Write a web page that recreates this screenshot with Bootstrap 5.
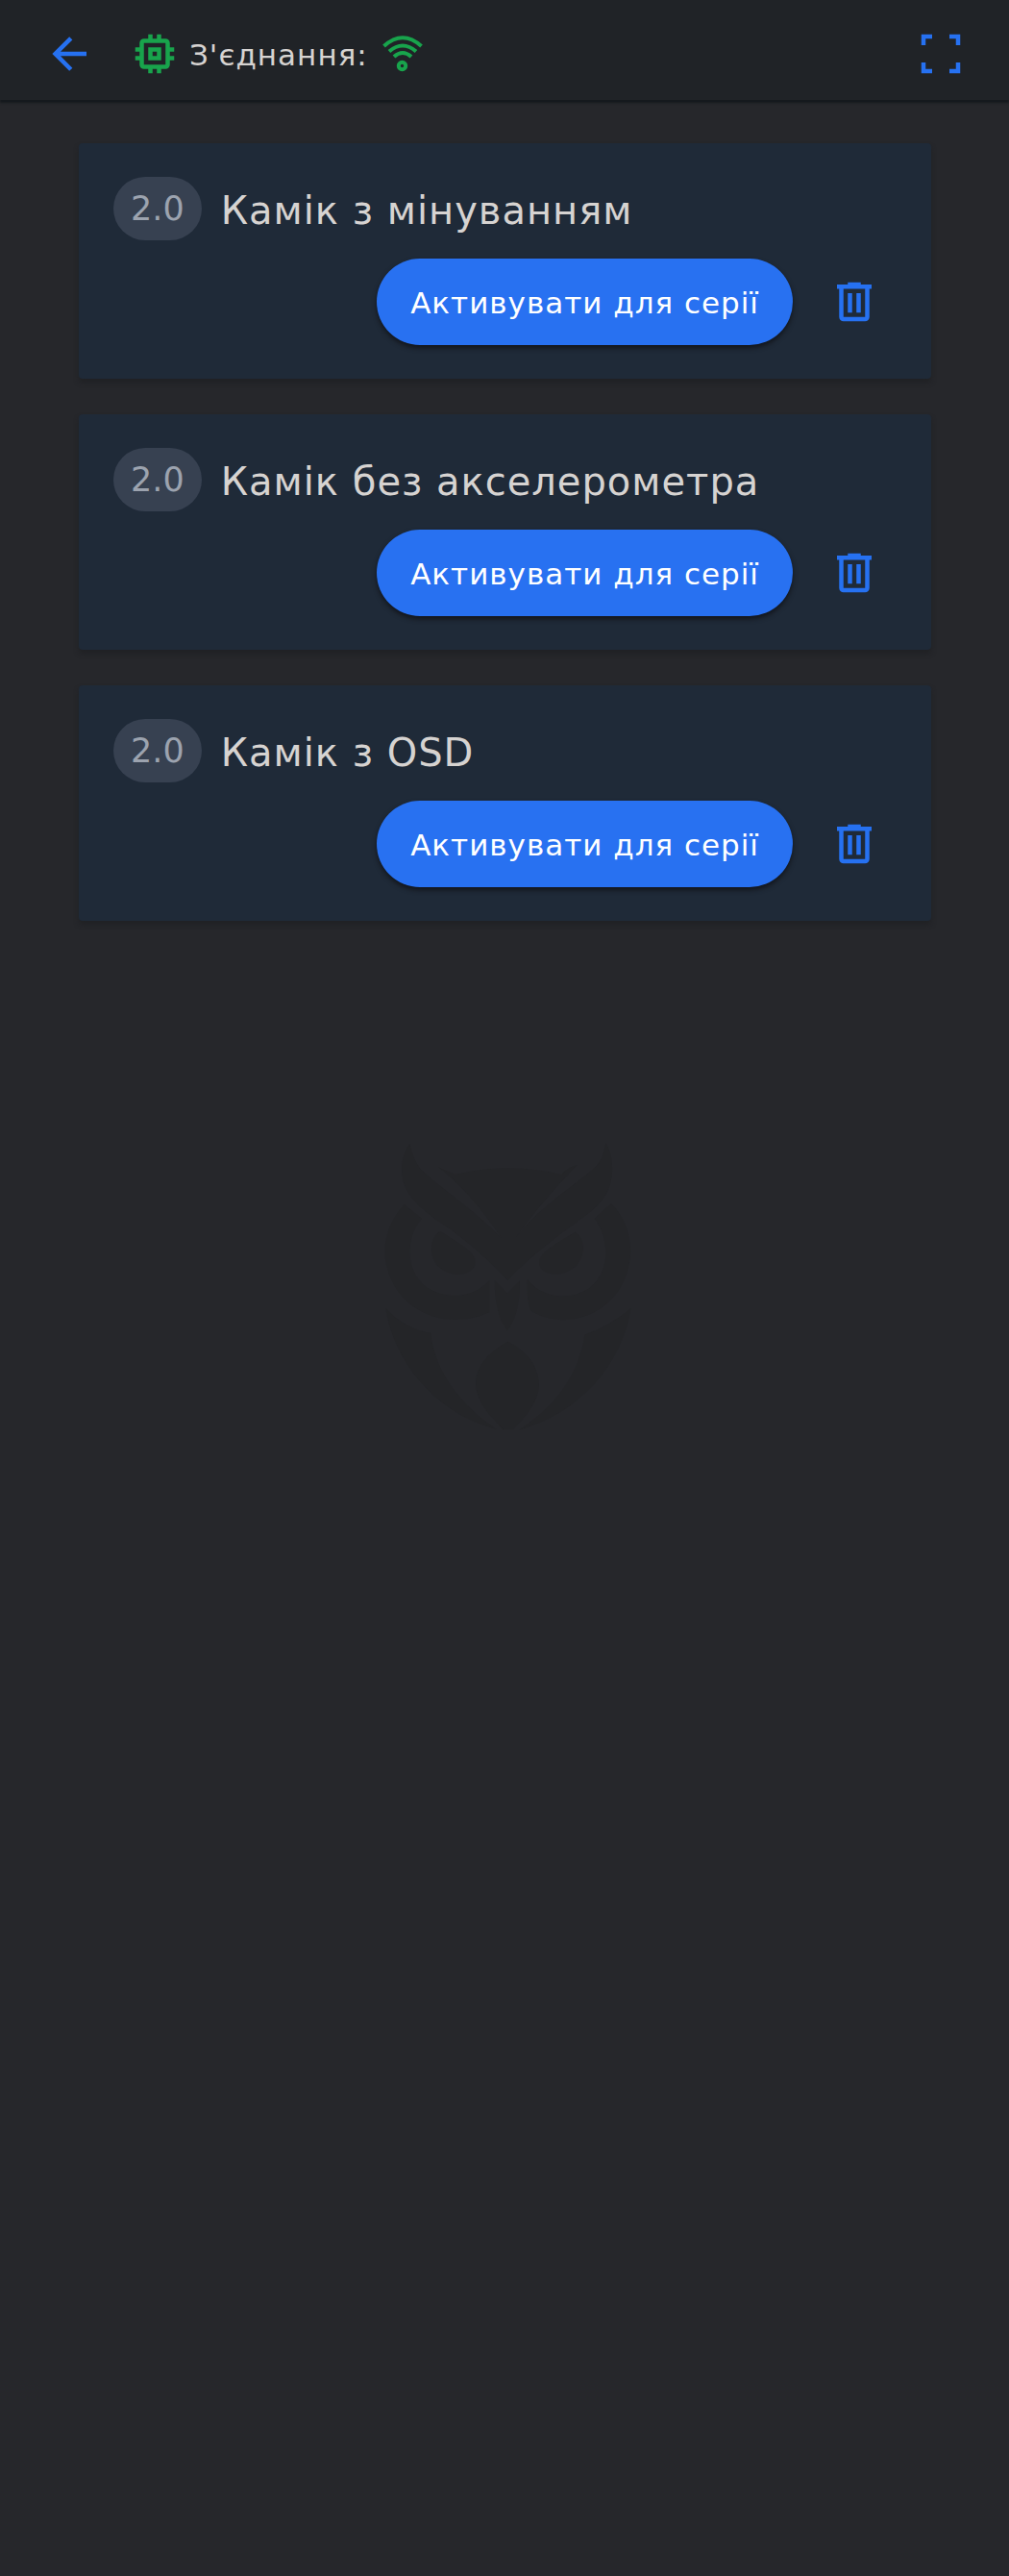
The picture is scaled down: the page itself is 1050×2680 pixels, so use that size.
<!DOCTYPE html>
<html lang="uk">
<head>
<meta charset="utf-8">
<meta name="viewport" content="width=device-width, initial-scale=1">
<title>Серії</title>
<link href="https://cdn.jsdelivr.net/npm/bootstrap@5.3.0/dist/css/bootstrap.min.css" rel="stylesheet">
<style>
  body { background: #26272b; color: #d6d3d1; font-family: "DejaVu Sans", sans-serif; }
  .topbar { height: 104px; padding: 7px 35px 0 36px; background: #202327; box-shadow: 0 3px 2px #15191d; }
  .icon-btn { width: 72px; height: 72px; color: #2671f1; background: none; border: 0; padding: 0; }
  .icon { width: 54px; height: 54px; fill: currentColor; flex: none; }
  .state-group { margin-left: 26px; color: #18a44c; }
  .status-text { font-size: 31px; line-height: 40px; letter-spacing: 1px; margin: 3px 9px 0; color: #d6d3d1; }
  .series-list { padding: 45px 81px 0 82px; gap: 37px; }
  .series { background: #1f2a38; border-radius: 4px; padding: 35px 36px; box-shadow: 0 4px 5px rgba(30, 32, 34, .7); }
  .series-head { height: 66px; gap: 20px; }
  .version { background: #374151; color: #9ca3af; font-size: 35px; line-height: 40px; padding: 13px 18px; border-radius: 33px; }
  .series-name { font-size: 40px; line-height: 48px; letter-spacing: 1px; font-weight: 400; margin: 11px 0 0; }
  .series-actions { margin-top: 19px; gap: 20px; }
  .activate { height: 90px; padding: 2px 35px 0; border: 0; border-radius: 45px; background: #2871f1; color: #fff; font-size: 31px; line-height: 40px; letter-spacing: 1px; box-shadow: 0 3px 5px #12151b; }
  .trash { width: 88px; }
  .owl { width: 266px; height: 303px; margin-top: 229px; fill: #242528; }
</style>
</head>
<body>
<header class="topbar d-flex align-items-center">
  <button class="icon-btn d-flex align-items-center justify-content-center" type="button" aria-label="Назад">
    <svg class="icon" viewBox="0 0 24 24"><path d="M20 11v2H8l5.500 5.500-1.420 1.420L4.160 12l7.920-7.920L13.500 5.500 8 11z"/></svg>
  </button>
  <div class="d-flex align-items-center state-group">
    <svg class="icon" viewBox="0 0 24 24"><path fill-rule="evenodd" d="M17 17H7V7h10zM21 11V9h-2V7a2 2 0 0 0-2-2h-2V3h-2v2h-2V3H9v2H7a2 2 0 0 0-2 2v2H3v2h2v2H3v2h2v2a2 2 0 0 0 2 2h2v2h2v-2h2v2h2v-2h2a2 2 0 0 0 2-2v-2h2v-2h-2v-2zM13 13h-2v-2h2zM15 9H9v6h6z"/></svg>
    <span class="status-text">З'єднання:</span>
    <svg class="icon" viewBox="0 0 54 54"><g fill="none" stroke="currentColor" stroke-width="4"><path d="M7.500 19Q27 1.500 46.500 19M13 24.500Q27 12.500 41 24.500M18 30Q27 22 36 30"/><circle cx="26.500" cy="39.500" r="3.700"/></g></svg>
  </div>
  <button class="icon-btn d-flex align-items-center justify-content-center ms-auto" type="button" aria-label="На весь екран">
    <svg class="icon" viewBox="0 0 24 24"><path d="M3 3h5v2H5v3H3zM16 3h5v5h-2V5h-3zM3 16h2v3h3v2H3zM19 16h2v5h-5v-2h3z"/></svg>
  </button>
</header>

<main class="d-flex flex-column">
  <div class="series-list d-flex flex-column">
    <article class="series">
      <div class="series-head d-flex align-items-start"><span class="version">2.0</span><h2 class="series-name">Камік з мінуванням</h2></div>
      <div class="series-actions d-flex justify-content-end align-items-center">
        <button class="activate fw-medium" type="button">Активувати для серії</button>
        <button class="icon-btn trash d-flex align-items-center justify-content-center" type="button" aria-label="Видалити"><svg class="icon" viewBox="0 0 24 24"><path d="M9 3v1H4v2h1v13a2 2 0 0 0 2 2h10a2 2 0 0 0 2-2V6h1V4h-5V3zM7 6h10v13H7zM9 8v9h2V8zM13 8v9h2V8z" fill-rule="evenodd"/></svg></button>
      </div>
    </article>
    <article class="series">
      <div class="series-head d-flex align-items-start"><span class="version">2.0</span><h2 class="series-name">Камік без акселерометра</h2></div>
      <div class="series-actions d-flex justify-content-end align-items-center">
        <button class="activate fw-medium" type="button">Активувати для серії</button>
        <button class="icon-btn trash d-flex align-items-center justify-content-center" type="button" aria-label="Видалити"><svg class="icon" viewBox="0 0 24 24"><path d="M9 3v1H4v2h1v13a2 2 0 0 0 2 2h10a2 2 0 0 0 2-2V6h1V4h-5V3zM7 6h10v13H7zM9 8v9h2V8zM13 8v9h2V8z" fill-rule="evenodd"/></svg></button>
      </div>
    </article>
    <article class="series">
      <div class="series-head d-flex align-items-start"><span class="version">2.0</span><h2 class="series-name">Камік з OSD</h2></div>
      <div class="series-actions d-flex justify-content-end align-items-center">
        <button class="activate fw-medium" type="button">Активувати для серії</button>
        <button class="icon-btn trash d-flex align-items-center justify-content-center" type="button" aria-label="Видалити"><svg class="icon" viewBox="0 0 24 24"><path d="M9 3v1H4v2h1v13a2 2 0 0 0 2 2h10a2 2 0 0 0 2-2V6h1V4h-5V3zM7 6h10v13H7zM9 8v9h2V8zM13 8v9h2V8z" fill-rule="evenodd"/></svg></button>
      </div>
    </article>
  </div>

  <svg class="owl mx-auto" viewBox="36 80 798 909" aria-hidden="true">
    <!-- brow and horns -->
    <path d="M139 88C110 130 108 185 125 225C145 265 180 295 220 325C300 375 380 445 445 515C510 445 590 385 665 330C715 295 750 265 765 215C778 165 770 115 751 86C745 120 738 145 715 165C640 230 540 290 472 380C520 310 590 230 662 155Q635 160 613 185Q445 145 280 185L228 162C300 215 370 300 425 383C350 305 260 245 185 180C158 155 148 125 139 88Z"/>
    <!-- eye rings -->
    <path d="M122 278C65 340 50 420 70 480C100 600 240 680 388 615V515C330 580 240 570 190 535C130 490 120 390 177 322Z"/>
    <path d="M768 276C825 330 840 420 820 480C790 610 640 680 520 612Q504 595 506 512C560 580 655 575 705 535C770 480 760 380 716 322Z"/>
    <!-- eyes -->
    <path d="M235 362C200 380 200 440 226 469C260 505 325 505 342 470C355 430 300 405 235 362Z"/>
    <path d="M655 364C690 385 685 440 662 466C625 505 560 505 545 470C535 430 590 405 655 364Z"/>
    <!-- beak -->
    <path d="M404 515L444 555L483 515Q484 620 444 672Q404 620 404 515Z"/>
    <!-- wings and chest -->
    <path d="M64 602C90 770 220 930 410 980C290 900 215 790 205 680Q120 665 64 602Z"/>
    <path d="M830 602C800 780 670 930 480 982C600 905 670 800 685 685Q760 660 830 602Z"/>
    <path d="M445 706C395 735 345 775 345 840C350 905 400 945 430 981H462C500 940 540 900 543 840C540 775 500 735 445 706Z"/>
  </svg>
</main>
<script src="https://cdn.jsdelivr.net/npm/bootstrap@5.3.0/dist/js/bootstrap.bundle.min.js"></script>
</body>
</html>
